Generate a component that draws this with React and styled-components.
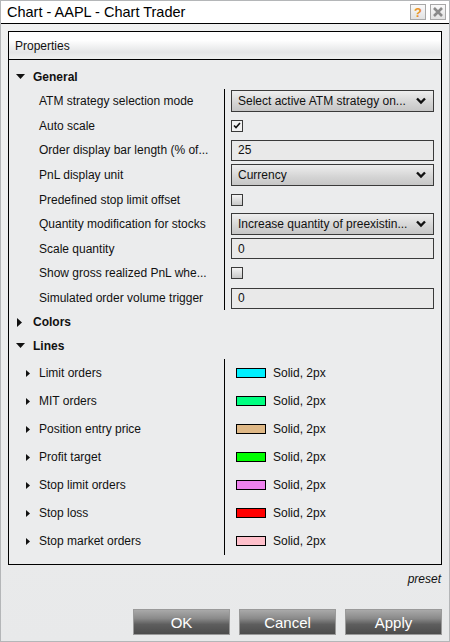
import styled, { createGlobalStyle } from "styled-components";

const Global = createGlobalStyle`
	html, body {
		margin: 0;
		padding: 0;
		background: #eceded;
	}
	* {
		box-sizing: border-box;
	}
`;

const Window = styled.div`
	width: 450px;
	height: 642px;
	display: flex;
	flex-direction: column;
	border: 1px solid #b4b6b8;
	background: linear-gradient(#f0f1f1, #e8e9ea);
	font-family: "Liberation Sans", Arial, sans-serif;
	color: #111;
	overflow: hidden;
`;

const TitleBar = styled.div`
	height: 23px;
	flex: none;
	display: flex;
	align-items: center;
	padding: 0 3px 0 6px;
	background: #fff;
	border-bottom: 1px solid #000;
`;

const Title = styled.div`
	flex: 1;
	font-size: 14.5px;
	color: #000;
`;

const TitleButton = styled.div`
	width: 16px;
	height: 16px;
	margin-left: 4px;
	border: 1px solid #a8a8a8;
	background: linear-gradient(#fafafa, #e2e2e2);
	display: flex;
	align-items: center;
	justify-content: center;
	font-size: 13px;
	font-weight: bold;
	color: ${(p) => p.color || "#888"};
`;

const Content = styled.div`
	flex: 1;
	display: flex;
	flex-direction: column;
	padding: 7px 7px 6px 7px;
`;

const Panel = styled.div`
	flex: 1;
	border: 1px solid #000;
	display: flex;
	flex-direction: column;
	background: #ebeced;
`;

const PanelHeader = styled.div`
	height: 28px;
	flex: none;
	display: flex;
	align-items: center;
	padding-left: 6px;
	font-size: 12px;
	border-bottom: 1px solid #000;
	background: linear-gradient(#ffffff 0%, #ffffff 30%, #e4e5e6 75%, #eeefef 100%);
`;

const PanelBody = styled.div`
	padding-top: 5px;
	display: flex;
	flex-direction: column;
`;

const Section = styled.div`
	height: 24px;
	display: flex;
	align-items: center;
	padding-left: ${(p) => (p.open ? "7px" : "8px")};
	font-size: 12px;
	font-weight: bold;
	gap: ${(p) => (p.open ? "8px" : "11px")};
`;

const Group = styled.div`
	display: grid;
	grid-template-columns: 215px 1fr;
	grid-auto-rows: ${(p) => p.rowHeight}px;
	margin-top: ${(p) => p.offset || 0}px;
`;

const Label = styled.div`
	display: flex;
	align-items: center;
	padding-left: ${(p) => (p.caret ? "17px" : "30px")};
	gap: 9px;
	font-size: 12px;
	white-space: nowrap;
	overflow: hidden;
`;

const Value = styled.div`
	border-left: 1px solid #000;
	display: flex;
	align-items: center;
	padding: 0 7px 0 6px;
	font-size: 12px;
`;

const Select = styled.div`
	width: 100%;
	height: 22px;
	border: 1px solid #3a3a3a;
	background: linear-gradient(#eeeeee, #d4d4d4 60%, #c6c6c6);
	display: flex;
	align-items: center;
	justify-content: space-between;
	padding: 0 7px 0 6px;
	font-size: 12px;
	white-space: nowrap;
`;

const Input = styled.div`
	width: 100%;
	height: 21px;
	border: 1px solid #3a3a3a;
	background: #e9e9e9;
	display: flex;
	align-items: center;
	padding-left: 6px;
	font-size: 12px;
`;

const Check = styled.div`
	width: 12px;
	height: 12px;
	border: 1px solid #3a3a3a;
	background: ${(p) => (p.checked ? "#f2f2f2" : "linear-gradient(#f4f4f4, #c8c8c8)")};
	display: flex;
	align-items: center;
	justify-content: center;
`;

const Swatch = styled.div`
	width: 30px;
	height: 10px;
	margin-left: 5px;
	margin-right: 7px;
	border: 1px solid #000;
	background: ${(p) => p.color};
`;

const Footer = styled.div`
	flex: none;
	display: flex;
	flex-direction: column;
	align-items: flex-end;
`;

const Preset = styled.div`
	margin-top: 7px;
	height: 14px;
	line-height: 14px;
	font-size: 12px;
	font-style: italic;
	padding-right: 1px;
`;

const Buttons = styled.div`
	margin-top: 23px;
	display: flex;
	gap: 9px;
`;

const Button = styled.div`
	width: 97px;
	height: 26px;
	border: 1px solid #9a9a9a;
	background: linear-gradient(#a9a9a9 0%, #8a8a8a 35%, #5e5e5e 60%, #4c4c4c 100%);
	color: #fff;
	font-size: 15px;
	display: flex;
	align-items: center;
	justify-content: center;
`;

const DownCaret = () => (
	<svg width="9" height="6" viewBox="0 0 9 6">
		<polygon points="0,0 9,0 4.5,5" fill="#111" />
	</svg>
);

const RightCaret = ({ small }) =>
	small ? (
		<svg width="4" height="7" viewBox="0 0 4 7">
			<polygon points="0,0 4,3.5 0,7" fill="#111" />
		</svg>
	) : (
		<svg width="5" height="9" viewBox="0 0 5 9">
			<polygon points="0,0 5,4.5 0,9" fill="#111" />
		</svg>
	);

const Chevron = () => (
	<svg width="10" height="8" viewBox="0 0 10 8">
		<polyline points="1,1.5 5,5.5 9,1.5" fill="none" stroke="#111" strokeWidth="2.4" />
	</svg>
);

const Tick = () => (
	<svg width="8" height="7" viewBox="0 0 8 7">
		<polyline points="1,3.5 3,5.5 7,1" fill="none" stroke="#111" strokeWidth="1.6" />
	</svg>
);

const general = [
	["ATM strategy selection mode", { select: "Select active ATM strategy on..." }],
	["Auto scale", { check: true }],
	["Order display bar length (% of...", { input: "25" }],
	["PnL display unit", { select: "Currency" }],
	["Predefined stop limit offset", { check: false }],
	["Quantity modification for stocks", { select: "Increase quantity of preexistin..." }],
	["Scale quantity", { input: "0" }],
	["Show gross realized PnL whe...", { check: false }],
	["Simulated order volume trigger", { input: "0" }],
];

const lines = [
	["Limit orders", "#00f0ff"],
	["MIT orders", "#00ff80"],
	["Position entry price", "#dfb886"],
	["Profit target", "#00ff00"],
	["Stop limit orders", "#ee82ee"],
	["Stop loss", "#ff0000"],
	["Stop market orders", "#ffc0cb"],
];

const Editor = ({ spec }) => {
	if (spec.select)
		return (
			<Select>
				<span>{spec.select}</span>
				<Chevron />
			</Select>
		);
	if (spec.input) return <Input>{spec.input}</Input>;
	return <Check checked={spec.check}>{spec.check && <Tick />}</Check>;
};

const App = () => {
	return (
		<>
			<Global />
			<Window>
				<TitleBar>
					<Title>Chart - AAPL - Chart Trader</Title>
					<TitleButton color="#e8942a">?</TitleButton>
					<TitleButton>
						<svg width="10" height="10" viewBox="0 0 10 10">
							<path d="M1,1 L9,9 M9,1 L1,9" stroke="#8a8a8a" strokeWidth="2.6" />
						</svg>
					</TitleButton>
				</TitleBar>
				<Content>
					<Panel>
						<PanelHeader>Properties</PanelHeader>
						<PanelBody>
							<Section open>
								<DownCaret />
								General
							</Section>
							<Group rowHeight={24.6}>
								{general.map(([label, spec]) => [
									<Label key={label}>{label}</Label>,
									<Value key={label + "v"}>
										<Editor spec={spec} />
									</Value>,
								])}
							</Group>
							<Section>
								<RightCaret />
								Colors
							</Section>
							<Section open>
								<DownCaret />
								Lines
							</Section>
							<Group rowHeight={28} offset={1}>
								{lines.map(([label, color]) => [
									<Label key={label} caret>
										<RightCaret small />
										{label}
									</Label>,
									<Value key={label + "v"}>
										<Swatch color={color} />
										Solid, 2px
									</Value>,
								])}
							</Group>
						</PanelBody>
					</Panel>
					<Footer>
						<Preset>preset</Preset>
						<Buttons>
							<Button>OK</Button>
							<Button>Cancel</Button>
							<Button>Apply</Button>
						</Buttons>
					</Footer>
				</Content>
			</Window>
		</>
	);
};

export default App;
